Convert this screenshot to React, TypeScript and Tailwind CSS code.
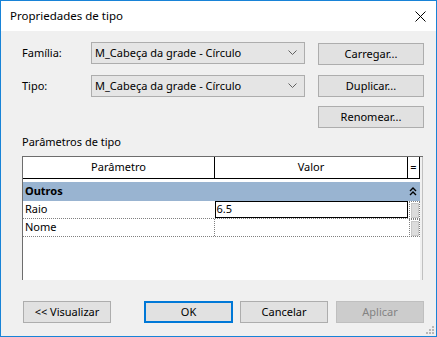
import React from "react";

const font = { fontFamily: '"Noto Sans", "Open Sans", sans-serif' };

function Combo({ value }: { value: string }) {
  return (
    <div className="w-[214px] h-[22px] border border-[#adadad] bg-[#e5e5e5] flex items-center pl-[3px] pr-[7px] text-[11px] text-black">
      <span className="flex-1 truncate">{value}</span>
      <svg width="9" height="6" viewBox="0 0 9 6" className="shrink-0">
        <path d="M0.5 0.5 L4.5 4.5 L8.5 0.5" fill="none" stroke="#606060" strokeWidth="1" />
      </svg>
    </div>
  );
}

function Btn({ children, w = "w-[106px]", primary = false, disabled = false }: { children: React.ReactNode; w?: string; primary?: boolean; disabled?: boolean }) {
  const cls = disabled
    ? "border border-[#bfbfbf] bg-[#cccccc] text-[#838383]"
    : primary
    ? "border-2 border-[#0078d7] bg-[#e1e1e1] text-black"
    : "border border-[#adadad] bg-[#e1e1e1] text-black";
  return (
    <div className={`${w} h-[22px] flex items-center justify-center text-[11px] ${cls}`}>{children}</div>
  );
}

function DotBox() {
  return (
    <div className="w-[11px] h-[18px] border border-dotted border-[#808080] flex items-center justify-center">
      <div className="w-[8px] h-[15px] bg-[#dcdcdc] border border-[#c8c8c8]" />
    </div>
  );
}

export default function App() {
  return (
    <div className="w-[437px] h-[337px] border border-[#1883d7] flex flex-col bg-[#f0f0f0] overflow-hidden text-black" style={font}>
      {/* Title bar */}
      <div className="h-[30px] bg-white flex items-center justify-between pl-[9px] pr-[10px] shrink-0">
        <span className="text-[11.5px]">Propriedades de tipo</span>
        <svg width="11" height="11" viewBox="0 0 11 11">
          <path d="M0.5 0.5 L10.5 10.5 M10.5 0.5 L0.5 10.5" stroke="#000" strokeWidth="1" />
        </svg>
      </div>

      {/* Body */}
      <div className="flex-1 flex flex-col pl-[21px] pr-[12px] pt-[11px] relative">
        <div className="flex items-start">
          <div className="w-[69px] h-[22px] flex items-center text-[11px]">Família:</div>
          <Combo value="M_Cabeça da grade - Círculo" />
          <div className="ml-[13px] mt-[1px]"><Btn>Carregar...</Btn></div>
        </div>
        <div className="flex items-start mt-[10px]">
          <div className="w-[69px] h-[22px] flex items-center text-[11px]">Tipo:</div>
          <Combo value="M_Cabeça da grade - Círculo" />
          <div className="ml-[13px]"><Btn>Duplicar...</Btn></div>
        </div>
        <div className="flex justify-end mt-[9px]">
          <Btn>Renomear...</Btn>
        </div>

        <div className="text-[11px] mt-[6px] h-[17px] flex items-center">Parâmetros de tipo</div>

        {/* Grid */}
        <div className="mt-[5px] w-[401px] h-[124px] bg-white border-l border-t border-[#6d6d6d] flex">
          <div className="w-[397px] flex flex-col">
            <div className="h-[22px] flex border-b border-black text-[11px]">
              <div className="w-[192px] border-r border-black flex items-center justify-center">Parâmetro</div>
              <div className="w-[193px] border-r border-black flex items-center justify-center">Valor</div>
              <div className="flex-1 border-r border-black flex items-center justify-center text-[11px]">=</div>
            </div>
            <div className="h-[19px] mt-[3px] bg-[#99b4d1] flex items-center justify-between pl-[2px] pr-[3px]">
              <span className="text-[11px] font-bold">Outros</span>
              <svg width="8" height="9" viewBox="0 0 8 9">
                <path d="M1 4 L4 1 L7 4 M1 8 L4 5 L7 8" fill="none" stroke="#000" strokeWidth="1.4" />
              </svg>
            </div>
            <div className="h-[18px] flex border-b border-dotted border-[#808080] text-[11px]">
              <div className="w-[192px] pl-[2px] flex items-center">Raio</div>
              <div className="w-[194px] border border-black flex items-center pl-[1px]">6.5</div>
              <div className="ml-[1px]"><DotBox /></div>
            </div>
            <div className="h-[18px] flex border-b border-dotted border-[#808080] text-[11px]">
              <div className="w-[192px] pl-[2px] flex items-center border-r border-dotted border-[#808080]">Nome</div>
              <div className="w-[194px]" />
              <div className="ml-[0px]"><DotBox /></div>
            </div>
          </div>
          <div className="flex-1 bg-[#f0f0f0] border-r border-[#c0c0c0]" />
        </div>

        {/* Bottom buttons */}
        <div className="flex mt-[21px] ml-[1px]">
          <Btn w="w-[88px]">&lt;&lt; Visualizar</Btn>
          <div className="ml-[33px]"><Btn w="w-[89px]" primary>OK</Btn></div>
          <div className="ml-[7px]"><Btn w="w-[88px]">Cancelar</Btn></div>
          <div className="ml-[8px]"><Btn w="w-[88px]" disabled>Aplicar</Btn></div>
        </div>

        <svg className="absolute right-[1px] bottom-[1px]" width="10" height="10" viewBox="0 0 10 10">
          <rect x="7" y="1" width="2" height="2" fill="#b8b8b8" />
          <rect x="4" y="4" width="2" height="2" fill="#b8b8b8" />
          <rect x="7" y="4" width="2" height="2" fill="#b8b8b8" />
          <rect x="1" y="7" width="2" height="2" fill="#b8b8b8" />
          <rect x="4" y="7" width="2" height="2" fill="#b8b8b8" />
          <rect x="7" y="7" width="2" height="2" fill="#b8b8b8" />
        </svg>
      </div>
    </div>
  );
}
